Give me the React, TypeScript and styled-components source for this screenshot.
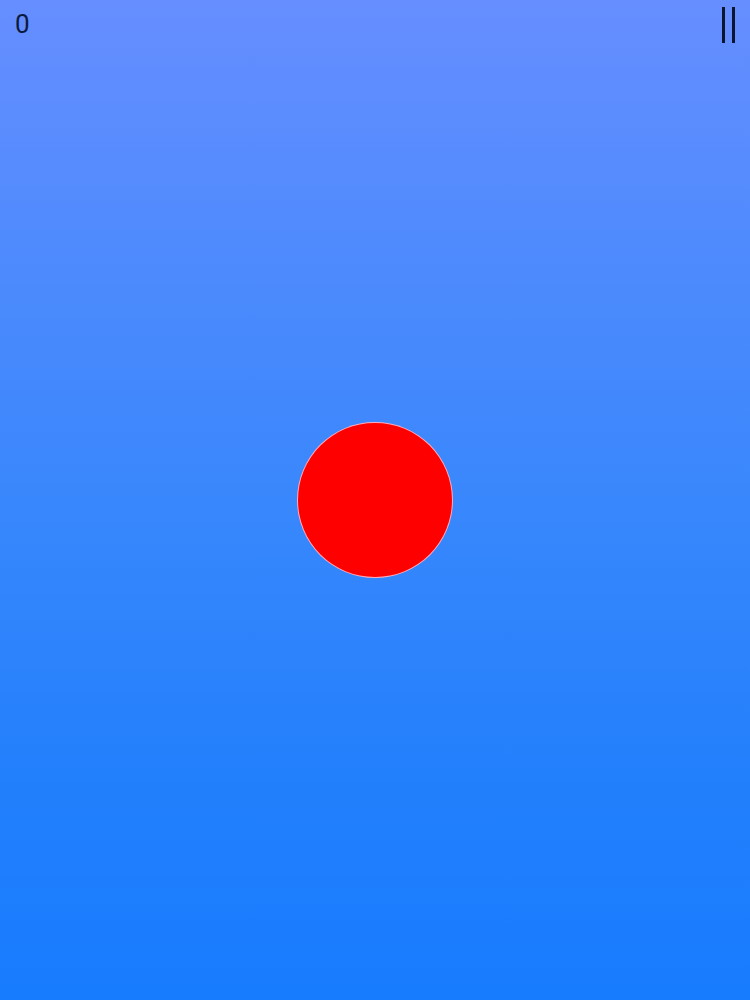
import React from "react";
import styled, { createGlobalStyle } from "styled-components";

const Global = createGlobalStyle`
  html, body { margin: 0; padding: 0; }
  body { font-family: Roboto, "Liberation Sans", sans-serif; }
`;

const Screen = styled.div`
  width: 750px;
  height: 1000px;
  position: relative;
  overflow: hidden;
  background: linear-gradient(180deg, #668eff 0%, #4a8afd 30%, #3586fc 55%, #217ffc 80%, #187cff 100%);
  display: flex;
  align-items: center;
  justify-content: center;
`;

const Hud = styled.div`
  position: absolute;
  top: 0;
  left: 0;
  right: 0;
  display: flex;
  justify-content: space-between;
  align-items: flex-start;
  padding: 7px 15px 0 15px;
`;

const Score = styled.div`
  font-family: Roboto, "Liberation Sans", sans-serif;
  font-size: 26px;
  line-height: 1;
  color: #0b1b3d;
  margin-top: 4px;
  padding-left: 0;
`;

const PauseButton = styled.button`
  display: flex;
  gap: 7px;
  background: none;
  border: none;
  padding: 0;
  cursor: pointer;
`;

const PauseBar = styled.span`
  display: block;
  width: 3px;
  height: 36px;
  background: #0b1530;
`;

const Ball = styled.div`
  width: 154px;
  height: 154px;
  border-radius: 50%;
  background: #ff0000;
  border: 1px solid rgba(255, 200, 220, 0.85);
`;

export default function App() {
  return (
    <>
      <Global />
      <Screen>
        <Hud>
          <Score>0</Score>
          <PauseButton aria-label="Pause">
            <PauseBar />
            <PauseBar />
          </PauseButton>
        </Hud>
        <Ball />
      </Screen>
    </>
  );
}
